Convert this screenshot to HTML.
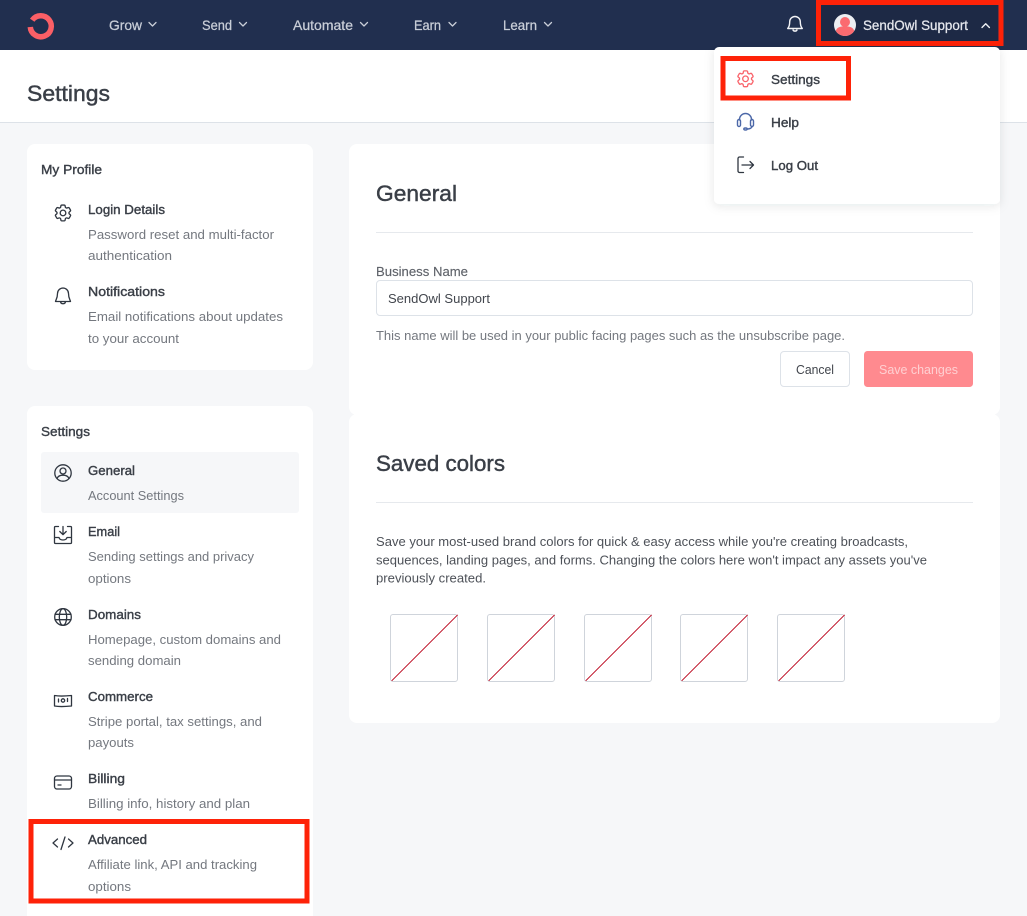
<!DOCTYPE html>
<html><head><meta charset="utf-8"><title>Settings</title>
<style>
html,body{margin:0;padding:0;background:#f6f7f9;overflow:hidden}
svg{display:block;font-family:"Liberation Sans",Arial,sans-serif}
.nav{font-size:13.7px;fill:#c9ced8;stroke:#c9ced8;stroke-width:.25}
.h{font-size:13.3px;fill:#3a3f47;stroke:#3a3f47;stroke-width:.4}
.d{font-size:13.3px;fill:#74787f}
.t{font-size:22.5px;fill:#3a3f47;stroke:#3a3f47;stroke-width:.45}
.i{fill:none;stroke:#2f3640;stroke-width:1.3;stroke-linecap:round;stroke-linejoin:round}
</style></head><body>
<svg width="1027" height="916" viewBox="0 0 1027 916" xmlns="http://www.w3.org/2000/svg">
<defs>
<filter id="sh" x="-10%" y="-10%" width="120%" height="125%"><feDropShadow dx="0" dy="2" stdDeviation="5" flood-color="#1b2540" flood-opacity=".1"/></filter>
<path id="gear" d="M9.594 3.94c.09-.542.56-.94 1.11-.94h2.593c.55 0 1.02.398 1.11.94l.213 1.281c.063.374.313.686.645.87.074.04.147.083.22.127.325.196.72.257 1.075.124l1.217-.456a1.125 1.125 0 011.37.49l1.296 2.247a1.125 1.125 0 01-.26 1.431l-1.003.827c-.293.24-.438.613-.431.992a6.759 6.759 0 010 .255c-.007.378.138.75.43.99l1.005.828c.424.35.534.954.26 1.43l-1.298 2.247a1.125 1.125 0 01-1.369.491l-1.217-.456c-.355-.133-.75-.072-1.076.124a6.57 6.57 0 01-.22.128c-.331.183-.581.495-.644.869l-.213 1.28c-.09.543-.56.941-1.11.941h-2.594c-.55 0-1.02-.398-1.11-.94l-.213-1.281c-.062-.374-.312-.686-.644-.87a6.52 6.52 0 01-.22-.127c-.325-.196-.72-.257-1.076-.124l-1.217.456a1.125 1.125 0 01-1.369-.49l-1.297-2.247a1.125 1.125 0 01.26-1.431l1.004-.827c.292-.24.437-.613.43-.992a6.932 6.932 0 010-.255c.007-.378-.138-.75-.43-.99l-1.004-.828a1.125 1.125 0 01-.26-1.43l1.297-2.247a1.125 1.125 0 011.37-.491l1.216.456c.356.133.751.072 1.076-.124.072-.044.146-.087.22-.128.332-.183.582-.495.644-.869l.214-1.281z"/>
</defs>
<rect width="1027" height="916" fill="#f6f7f9"/>
<!-- header -->
<rect y="50" width="1027" height="72" fill="#fff"/>
<rect y="122" width="1027" height="1" fill="#dde2e8"/>
<text x="27" y="101" class="t" textLength="83" lengthAdjust="spacingAndGlyphs">Settings</text>
<!-- nav -->
<rect width="1027" height="50" fill="#212f4f"/>
<path d="M32.200 20.200A10.500 10.500 0 1 1 30.300 27" fill="none" stroke="#fb5f66" stroke-width="5.500"/>
<text x="109" y="30" class="nav" textLength="33" lengthAdjust="spacingAndGlyphs">Grow</text>
<text x="202" y="30" class="nav" textLength="30" lengthAdjust="spacingAndGlyphs">Send</text>
<text x="293" y="30" class="nav" textLength="60" lengthAdjust="spacingAndGlyphs">Automate</text>
<text x="414" y="30" class="nav" textLength="27" lengthAdjust="spacingAndGlyphs">Earn</text>
<text x="503" y="30" class="nav" textLength="34" lengthAdjust="spacingAndGlyphs">Learn</text>
<g fill="none" stroke="#c9ced8" stroke-width="1.3" stroke-linecap="round" stroke-linejoin="round">
<path d="M149 22.500l3.500 3.500 3.500-3.500"/>
<path d="M239.500 22.500l3.500 3.500 3.500-3.500"/>
<path d="M360.500 22.500l3.500 3.500 3.500-3.500"/>
<path d="M449 22.500l3.500 3.500 3.500-3.500"/>
<path d="M544.500 22.500l3.500 3.500 3.500-3.500"/>
</g>
<path d="M795 16.500a5.300 5.300 0 0 0-5.300 5.300c0 4.500-2 6.700-2 6.700h14.600s-2-2.200-2-6.700a5.300 5.300 0 0 0-5.300-5.300zM792.800 29.500a2.300 2.300 0 0 0 4.400 0" fill="none" stroke="#f2f3f6" stroke-width="1.400" stroke-linejoin="round"/>
<rect x="820" y="5" width="178" height="36" fill="#1d2945"/>
<circle cx="845" cy="25" r="11" fill="#eceef2"/>
<circle cx="845" cy="22" r="5" fill="#fb6b70"/>
<path d="M835.800 31c.6-3.200 4.200-4.700 9.200-4.700s8.600 1.500 9.200 4.700a11 11 0 0 1-18.400 0z" fill="#fb6b70"/>
<text x="863" y="30" font-size="13.700" fill="#e6e8ee" stroke="#e6e8ee" stroke-width=".25" textLength="105" lengthAdjust="spacingAndGlyphs">SendOwl Support</text>
<path d="M982 27.500l3.700-3.700 3.700 3.700" fill="none" stroke="#eef0f4" stroke-width="1.400" stroke-linecap="round" stroke-linejoin="round"/>
<rect x="818.500" y="2.500" width="182.500" height="41" fill="none" stroke="#fe2208" stroke-width="5"/>
<!-- left cards -->
<rect x="27" y="144" width="286" height="226" rx="8" fill="#fff"/>
<rect x="27" y="406" width="286" height="530" rx="8" fill="#fff"/>
<rect x="41" y="452" width="258" height="61" rx="3" fill="#f6f7f9"/>
<text x="41" y="174" class="h" textLength="61" lengthAdjust="spacingAndGlyphs">My Profile</text>
<text x="88" y="214" class="h" textLength="77" lengthAdjust="spacingAndGlyphs">Login Details</text>
<text x="88" y="239" class="d" textLength="186" lengthAdjust="spacingAndGlyphs">Password reset and multi-factor</text>
<text x="88" y="260" class="d" textLength="84" lengthAdjust="spacingAndGlyphs">authentication</text>
<text x="88" y="296" class="h" textLength="77" lengthAdjust="spacingAndGlyphs">Notifications</text>
<text x="88" y="321" class="d" textLength="195" lengthAdjust="spacingAndGlyphs">Email notifications about updates</text>
<text x="88" y="343" class="d" textLength="91" lengthAdjust="spacingAndGlyphs">to your account</text>
<text x="41" y="436" class="h" textLength="49" lengthAdjust="spacingAndGlyphs">Settings</text>
<text x="88" y="475" class="h" textLength="47" lengthAdjust="spacingAndGlyphs">General</text>
<text x="88" y="500" class="d" textLength="96" lengthAdjust="spacingAndGlyphs">Account Settings</text>
<text x="88" y="536" class="h" textLength="32" lengthAdjust="spacingAndGlyphs">Email</text>
<text x="88" y="561" class="d" textLength="166" lengthAdjust="spacingAndGlyphs">Sending settings and privacy</text>
<text x="88" y="583" class="d" textLength="43" lengthAdjust="spacingAndGlyphs">options</text>
<text x="88" y="619" class="h" textLength="53" lengthAdjust="spacingAndGlyphs">Domains</text>
<text x="88" y="644" class="d" textLength="193" lengthAdjust="spacingAndGlyphs">Homepage, custom domains and</text>
<text x="88" y="665" class="d" textLength="93" lengthAdjust="spacingAndGlyphs">sending domain</text>
<text x="88" y="701" class="h" textLength="65" lengthAdjust="spacingAndGlyphs">Commerce</text>
<text x="88" y="726" class="d" textLength="174" lengthAdjust="spacingAndGlyphs">Stripe portal, tax settings, and</text>
<text x="88" y="747" class="d" textLength="46" lengthAdjust="spacingAndGlyphs">payouts</text>
<text x="88" y="783" class="h" textLength="37" lengthAdjust="spacingAndGlyphs">Billing</text>
<text x="88" y="808" class="d" textLength="162" lengthAdjust="spacingAndGlyphs">Billing info, history and plan</text>
<text x="88" y="844" class="h" textLength="59" lengthAdjust="spacingAndGlyphs">Advanced</text>
<text x="88" y="869" class="d" textLength="169" lengthAdjust="spacingAndGlyphs">Affiliate link, API and tracking</text>
<text x="88" y="891" class="d" textLength="43" lengthAdjust="spacingAndGlyphs">options</text>
<!-- left icons -->
<g class="i" transform="translate(52.440 202.400) scale(.88)" style="stroke-width:1.500"><use href="#gear"/><circle cx="12" cy="12" r="3.200"/></g>
<path class="i" d="M63 288a5.500 5.500 0 0 0-5.500 5.500c0 5-1.800 6.500-2 8h15c-.2-1.500-2-3-2-8A5.500 5.500 0 0 0 63 288zM60.500 301.500c.3 3 4.700 3 5 0"/>
<g class="i"><circle cx="63" cy="473" r="8.200"/><circle cx="63" cy="471" r="3"/><path d="M57 478.500c1-2.500 3.200-3.300 6-3.300s5 .8 6 3.300"/></g>
<g class="i"><path d="M58.500 526.500h-3a1 1 0 0 0-1 1v15a1 1 0 0 0 1 1h15a1 1 0 0 0 1-1v-15a1 1 0 0 0-1-1h-3M54.500 537.500h4.500c.5 2 2 2.500 4 2.500s3.500-.5 4-2.500h4.500M63 526.500v8M59.800 531.500l3.200 3.200 3.200-3.200"/></g>
<g class="i"><circle cx="63" cy="617" r="8.300"/><ellipse cx="63" cy="617" rx="3.700" ry="8.300"/><path d="M55 614.300h16M55 619.700h16"/></g>
<g class="i"><path d="M54.500 695.500c5 1 12 .5 17 0v10.500c-5 .5-12 1-17 0zM58.500 699v3M67.500 698.500v3"/><circle cx="63" cy="700.500" r="1.700"/></g>
<g class="i"><rect x="54.500" y="776" width="17" height="13" rx="2.500"/><path d="M54.500 780h17M58 785h3"/></g>
<g class="i"><path d="M57.500 839l-4.500 4 4.500 4M68.500 839l4.500 4-4.500 4M65 837l-4 12.500"/></g>
<!-- main cards -->
<rect x="349" y="144" width="651" height="271" rx="8" fill="#fff"/>
<rect x="349" y="414" width="651" height="309" rx="8" fill="#fff"/>
<text x="376" y="201" class="t" textLength="81" lengthAdjust="spacingAndGlyphs">General</text>
<rect x="376" y="232" width="597" height="1" fill="#e6e9ed"/>
<text x="376" y="276" font-size="13.300" fill="#5f636a" stroke="#5f636a" stroke-width=".15" textLength="92" lengthAdjust="spacingAndGlyphs">Business Name</text>
<rect x="376.500" y="280.500" width="596" height="35" rx="3.500" fill="#fff" stroke="#dde2e8"/>
<text x="388" y="303" font-size="13.300" fill="#42464d" textLength="102" lengthAdjust="spacingAndGlyphs">SendOwl Support</text>
<text x="376" y="340" class="d" textLength="469" lengthAdjust="spacingAndGlyphs">This name will be used in your public facing pages such as the unsubscribe page.</text>
<rect x="780.500" y="351.500" width="69" height="35" rx="3.500" fill="#fff" stroke="#dde2e8"/>
<text x="796" y="374" font-size="13.300" fill="#42464d" textLength="38" lengthAdjust="spacingAndGlyphs">Cancel</text>
<rect x="864" y="351" width="109" height="36" rx="3.500" fill="#ff8a8f"/>
<text x="879" y="374" font-size="13.300" fill="#ffd0d2" textLength="79" lengthAdjust="spacingAndGlyphs">Save changes</text>
<text x="376" y="471" class="t" textLength="129" lengthAdjust="spacingAndGlyphs">Saved colors</text>
<rect x="376" y="502" width="597" height="1" fill="#e6e9ed"/>
<text x="376" y="546" font-size="13.300" fill="#4d5158" textLength="532" lengthAdjust="spacingAndGlyphs">Save your most-used brand colors for quick &amp; easy access while you're creating broadcasts,</text>
<text x="376" y="564.500" font-size="13.300" fill="#4d5158" textLength="551" lengthAdjust="spacingAndGlyphs">sequences, landing pages, and forms. Changing the colors here won't impact any assets you've</text>
<text x="376" y="582.500" font-size="13.300" fill="#4d5158" textLength="110" lengthAdjust="spacingAndGlyphs">previously created.</text>
<g fill="#fff" stroke="#cfd4db">
<rect x="390.500" y="614.500" width="67" height="67" rx="2.500"/>
<rect x="487.500" y="614.500" width="67" height="67" rx="2.500"/>
<rect x="584.500" y="614.500" width="67" height="67" rx="2.500"/>
<rect x="680.500" y="614.500" width="67" height="67" rx="2.500"/>
<rect x="777.500" y="614.500" width="67" height="67" rx="2.500"/>
</g>
<g stroke="#c4283c" stroke-width="1" shape-rendering="crispEdges">
<path d="M391.500 681l66-66M488.500 681l66-66M585.500 681l66-66M681.500 681l66-66M778.500 681l66-66"/>
</g>
<!-- dropdown -->
<rect x="714" y="47" width="286" height="157" rx="5" fill="#fff" filter="url(#sh)"/>
<text x="771" y="84" class="h" textLength="49" lengthAdjust="spacingAndGlyphs">Settings</text>
<text x="771" y="127" class="h" textLength="28" lengthAdjust="spacingAndGlyphs">Help</text>
<text x="771" y="170" class="h" textLength="47" lengthAdjust="spacingAndGlyphs">Log Out</text>
<g transform="translate(734.940 68.240) scale(.88)" fill="none" stroke="#f9646b" stroke-width="1.500" stroke-linejoin="round"><use href="#gear"/><circle cx="12" cy="12" r="3.200"/></g>
<g fill="none" stroke="#4c68a8" stroke-width="1.400" stroke-linecap="round">
<path d="M739.500 120v-.5a6 6 0 0 1 12 0v.5"/>
<rect x="737.500" y="119.500" width="3" height="7" rx="1.500"/>
<rect x="750.500" y="119.500" width="3" height="7" rx="1.500"/>
<path d="M752 126.500c0 1.500-2.500 2.500-5 2.500"/>
<ellipse cx="745.500" cy="129" rx="1.700" ry="1"/>
</g>
<g class="i"><path d="M743.500 157h-4a1.500 1.500 0 0 0-1.500 1.500v12.500a1.500 1.500 0 0 0 1.500 1.500h4M742 165h11.500M750 161.500l3.500 3.500-3.500 3.500"/></g>
<rect x="723" y="58.500" width="125.500" height="39.500" fill="none" stroke="#fe2208" stroke-width="5"/>
<rect x="31" y="821.500" width="276" height="79.500" fill="none" stroke="#fe2208" stroke-width="5"/>
</svg>
</body></html>
